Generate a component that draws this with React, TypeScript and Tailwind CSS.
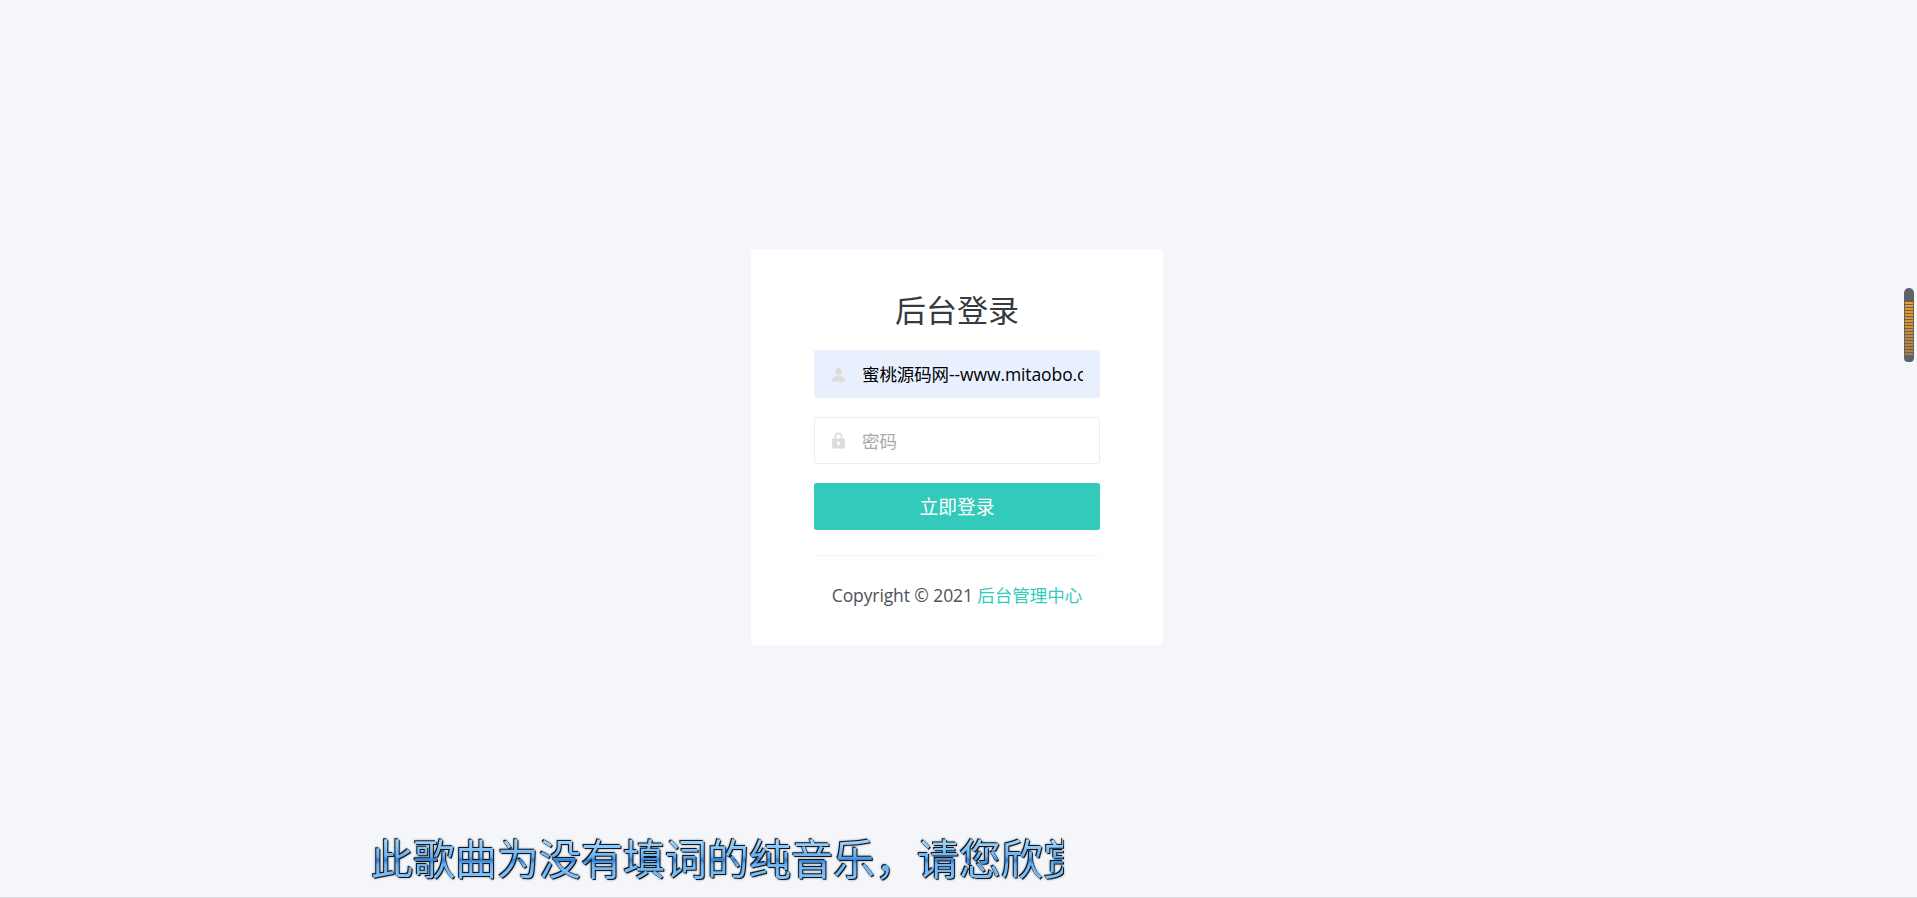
import React from "react";

const cjk = "[font-family:'Open_Sans','Noto_Sans_CJK_SC',sans-serif]";

function UserIcon() {
  return (
    <svg viewBox="0 0 14 14" className="w-[15px] h-[15px]" fill="#dcdcdc">
      <ellipse cx="7" cy="4.2" rx="3" ry="3.2" />
      <path d="M1 13c0-3 2.2-4.6 6-4.6s6 1.6 6 4.6c0 .5-.3.7-.8.7H1.8c-.5 0-.8-.2-.8-.7z" />
    </svg>
  );
}

function LockIcon() {
  return (
    <svg viewBox="0 0 14 16" className="w-[15px] h-[17px]">
      <path
        fillRule="evenodd"
        fill="#dcdcdc"
        d="M3.2 6V4.2C3.2 2 4.9.5 7 .5s3.8 1.5 3.8 3.7V6h1.4c.5 0 .8.3.8.8v8c0 .5-.3.7-.8.7H1.8c-.5 0-.8-.2-.8-.7v-8c0-.5.3-.8.8-.8zm1.6 0h4.4V4.2C9.2 3 8.2 2.1 7 2.1S4.8 3 4.8 4.2zM7 9a1.4 1.4 0 0 0-.7 2.6V13h1.4v-1.4A1.4 1.4 0 0 0 7 9z"
      />
    </svg>
  );
}

export default function App() {
  return (
    <div className={`relative h-[898px] overflow-hidden bg-[#f5f6fa] flex flex-col items-center pr-[3px] pt-[249px] ${cjk}`}>
      <div className="w-[412px] h-[396px] bg-white rounded-[5px] px-[63px] pt-[41px] flex flex-col">
        <h1 className="text-[31px] leading-[40px] text-center text-[#343a40] font-normal">后台登录</h1>
        <div className="mt-[20px] h-[48px] rounded-[2.5px] bg-[#e8f0fe] border border-[#e8f0fe] flex items-center overflow-hidden pr-[16px]">
          <span className="w-[46px] mr-[1px] shrink-0 flex justify-center"><UserIcon /></span>
          <span className="text-[17.5px] text-black whitespace-nowrap overflow-hidden tracking-[-0.1px]">蜜桃源码网--www.mitaobo.com</span>
        </div>
        <div className="mt-[19px] h-[47px] rounded-[2.5px] bg-white border border-[#ececee] flex items-center">
          <span className="w-[46px] mr-[1px] shrink-0 flex justify-center"><LockIcon /></span>
          <span className="text-[17.5px] text-[#a8a8a8] pt-[1px]">密码</span>
        </div>
        <button className="mt-[19px] h-[47px] rounded-[2.5px] bg-[#33cabb] text-white text-[18.75px] pt-[1px] shrink-0">立即登录</button>
        <div className="mt-[25px] h-px bg-[#f5f5f5]" />
        <p className="mt-[26px] text-center text-[17.5px] leading-[26px] text-[#4d5259]">
          <span className="tracking-[-0.1px]">Copyright © 2021 </span><span className="text-[#33cabb]">后台管理中心</span>
        </p>
      </div>

      <div className="absolute left-[371px] top-[831px] w-[692px] overflow-hidden h-[56px] [filter:drop-shadow(-0.8px_-0.6px_0.3px_#10181f)_drop-shadow(1.2px_1.2px_0.5px_#10181f)_drop-shadow(0_0_0.8px_#8a919b)]">
        <span className="block whitespace-nowrap text-[42px] leading-[56px] text-transparent bg-clip-text bg-[linear-gradient(180deg,#a6d8fc_15%,#68b2f4_45%,#2f7fd4_52%,#6cb4f6_60%,#86c4f8_90%)]">
          此歌曲为没有填词的纯音乐，请您欣赏
        </span>
      </div>

      <div className="absolute left-[1904px] top-[288px] w-[10px] h-[74px] rounded-t-[5px] rounded-b-[4px] bg-[#5f6368] px-[1px] pt-[14px] flex flex-col gap-[1px] overflow-hidden">
        {Array.from({ length: 18 }).map((_, i) => (
          <div key={i} className="h-[2px] shrink-0 bg-[#ff9d12]" style={{ opacity: 1 - i * 0.03 }} />
        ))}
      </div>

      <div className="absolute left-0 right-0 bottom-0 h-px bg-[#d8d8e0]" />
    </div>
  );
}
